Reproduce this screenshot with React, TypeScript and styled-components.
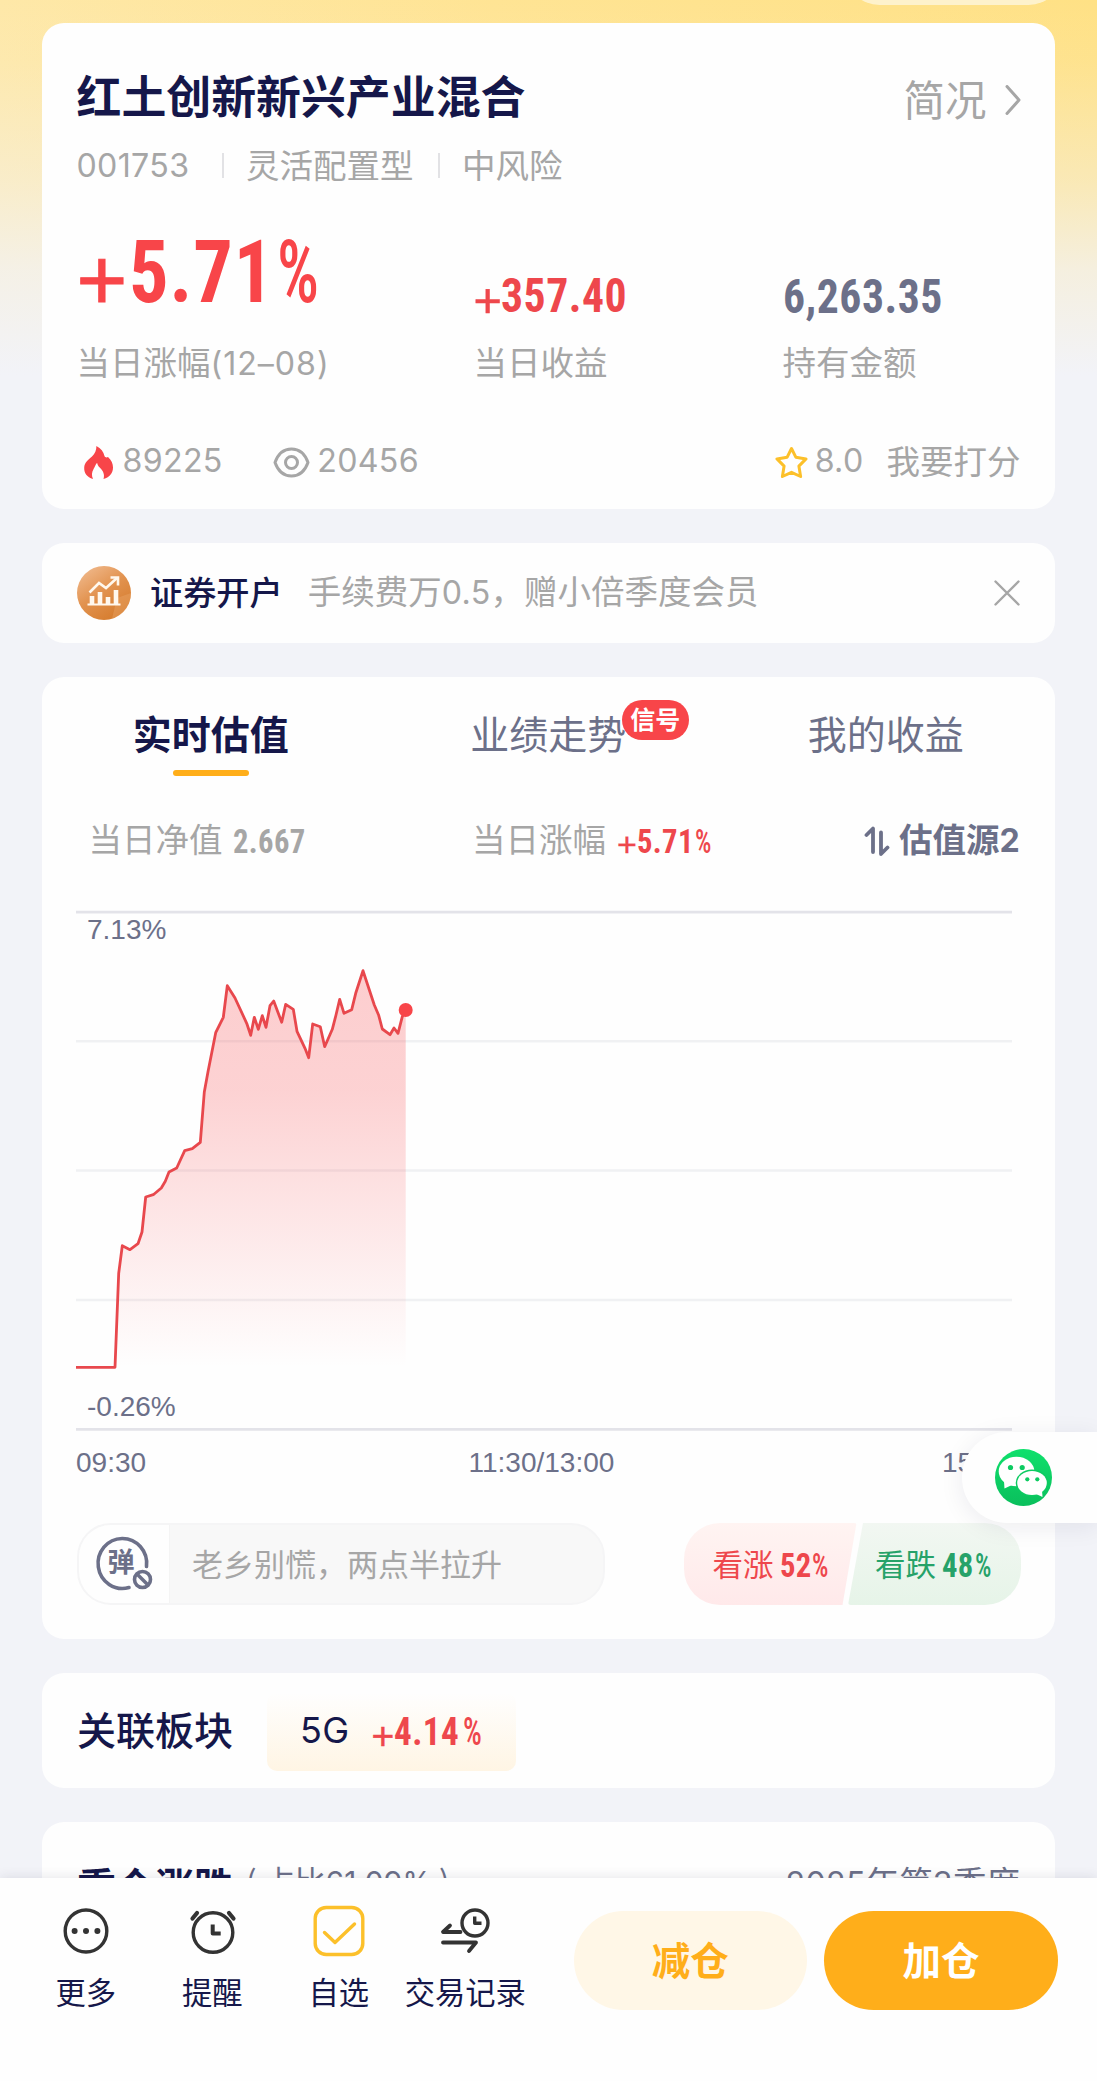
import React from 'react';
import styled, { createGlobalStyle, css } from 'styled-components';

const color = {
  navy: '#15174a',
  grey: '#a6a6a6',
  slate: '#6c7089',
  red: '#f84549',
  redText: '#ee474c',
  green: '#26a269',
  amber: '#ffae1a',
  page: '#f2f3f8',
};

const GlobalStyle = createGlobalStyle`
  *, *::before, *::after { box-sizing: border-box; }
  body {
    margin: 0;
    background: ${color.page};
    font-family: "Noto Sans CJK SC", "Noto Sans", sans-serif;
    color: ${color.navy};
  }
  svg { display: block; flex: none; }
`;

/* ---------- shell ---------- */

const Screen = styled.main`
  position: relative;
  width: 1097px;
  height: 2081px;
  overflow: hidden;
  background:
    linear-gradient(180deg, rgba(242, 243, 248, 0) 0, rgba(242, 243, 248, 0.08) 60px, rgba(242, 243, 248, 0.42) 180px, rgba(242, 243, 248, 0.78) 270px, ${color.page} 375px),
    linear-gradient(90deg, #fee8a8 0, #ffe494 45%, #ffe185 100%);
`;

const TopPill = styled.div`
  position: absolute;
  top: -64px;
  right: 34px;
  width: 218px;
  height: 69px;
  border-radius: 35px;
  background: #fef2cc;
`;

const Cards = styled.div`
  display: flex;
  flex-direction: column;
  gap: 34px;
  padding: 22.5px 42.5px 0 42px;
`;

const Card = styled.section<{ $h: number }>`
  height: ${(p) => p.$h}px;
  flex: none;
  border-radius: 22px;
  background: #fefefe;
`;

/* Latin letters and digits set inside Chinese copy */
const Latin = styled.span`
  font-family: Inter, "Noto Sans", sans-serif;
  font-size: 0.96em;
  letter-spacing: 0.01em;
`;

/* ---------- numerals ---------- */

const FigureBox = styled.span<{ $size: number; $w: number; $color: string }>`
  display: inline-flex;
  align-items: flex-start;
  width: ${(p) => p.$w}px;
  font-family: "Roboto Condensed", Roboto, sans-serif;
  font-size: ${(p) => p.$size}px;
  font-weight: 700;
  color: ${(p) => p.$color};
  white-space: nowrap;
`;

const Digits = styled.span`
  display: inline-block;
  transform: scaleX(0.9);
  transform-origin: 0 50%;
  letter-spacing: 0.012em;
`;

const Plus = styled.span`
  display: inline-block;
  transform: translateY(0.09em);
  font-family: "Liberation Sans", sans-serif;
  font-weight: 400;
  -webkit-text-stroke: 0.012em currentColor;
`;

const Percent = styled.span`
  display: inline-block;
  transform: scaleX(0.76);
  transform-origin: 0 50%;
  font-weight: 500;
`;

const Part = styled.span<{ $w: number }>`
  width: ${(p) => p.$w}em;
  flex: none;
`;

type FigureProps = {
  signWidth?: number;
  digits: string;
  percent?: boolean;
  size: number;
  tone: string;
  digitsWidth: number;
};

function Figure({ signWidth = 0, digits, percent, size, tone, digitsWidth }: FigureProps) {
  const em = signWidth + digitsWidth + (percent ? 0.48 : 0);
  return (
    <FigureBox $size={size} $w={em * size} $color={tone}>
      {signWidth > 0 && (
        <Part $w={signWidth}>
          <Plus>+</Plus>
        </Part>
      )}
      <Part $w={digitsWidth}>
        <Digits>{digits}</Digits>
      </Part>
      {percent && (
        <Part $w={0.48}>
          <Percent>%</Percent>
        </Part>
      )}
    </FigureBox>
  );
}

/* ---------- fund summary ---------- */

const Summary = styled(Card)`
  padding: 42px 34px 0 34.5px;
`;

const TitleRow = styled.header`
  display: flex;
  justify-content: space-between;
  height: 60px;
  line-height: 60px;
`;

const FundName = styled.h1`
  margin: 0;
  font-size: 44.9px;
  font-weight: 700;
`;

const Brief = styled.a`
  display: flex;
  align-items: center;
  gap: 18px;
  height: 60px;
  padding-top: 7px;
  font-size: 41.5px;
  color: ${color.grey};

  svg { margin-top: 4px; }
`;

const Meta = styled.div`
  display: flex;
  align-items: center;
  height: 40px;
  margin-top: 19px;
  font-size: 33.5px;
  line-height: 40px;
  color: ${color.grey};
`;

const FundCode = styled.span`
  width: 110px;
  margin-top: 2px;
  white-space: nowrap;
`;

const Divider = styled.i<{ $l: number; $r: number }>`
  width: 2px;
  height: 25px;
  margin: 4px ${(p) => p.$r}px 0 ${(p) => p.$l}px;
  background: #e2e2e5;
`;

const StatGrid = styled.div`
  display: grid;
  grid-template-columns: 397px 309px 1fr;
  margin-top: 42px;
`;

const FigureSlot = styled.div<{ $lh: number }>`
  display: flex;
  align-items: flex-end;
  height: 92px;
  line-height: ${(p) => p.$lh}px;
`;

const StatLabel = styled.div`
  margin-top: 23px;
  font-size: 33.5px;
  line-height: 40px;
  color: ${color.grey};
`;

const DateRange = styled(Latin)`
  letter-spacing: 0.03em;
`;

const CounterRow = styled.div`
  display: flex;
  align-items: center;
  height: 40px;
  margin-top: 56px;
  padding-left: 6px;
  font-size: 33.5px;
  line-height: 40px;
  color: ${color.grey};
`;

const Counter = styled.span<{ $gap: number; $ml?: string }>`
  display: flex;
  align-items: center;
  gap: ${(p) => p.$gap}px;
  margin-left: ${(p) => p.$ml ?? '0'};

  svg { margin-top: 6px; }
`;

/* ---------- banner ---------- */

const Banner = styled(Card)`
  display: flex;
  align-items: center;
  padding: 0 34.5px 0 35px;
  font-size: 33.5px;
  line-height: 40px;
`;

const BannerTitle = styled.strong`
  margin: -4px 0 0 19px;
  font-size: 33.2px;
  font-weight: 500;
`;

const BannerText = styled.span`
  margin: -2px auto 0 25px;
  color: ${color.grey};
`;

/* ---------- valuation ---------- */

const Tabs = styled.nav`
  display: grid;
  grid-template-columns: repeat(3, 1fr);
  padding-top: 24.5px;
`;

const Tab = styled.div<{ $active?: boolean }>`
  position: relative;
  display: flex;
  flex-direction: column;
  align-items: center;
  height: 74.5px;
  font-size: 39px;
  line-height: 60px;
  color: ${color.slate};
  ${(p) =>
    p.$active &&
    css`
      color: ${color.navy};
      font-weight: 700;
      &::after {
        content: '';
        width: 76px;
        height: 6px;
        margin-top: 8.5px;
        border-radius: 3px;
        background: ${color.amber};
      }
    `}
`;

const Signal = styled.span`
  position: absolute;
  top: -2px;
  left: 242px;
  width: 67.5px;
  height: 40px;
  border-radius: 20px;
  background: ${color.red};
  color: #fff;
  font-size: 25px;
  font-weight: 700;
  line-height: 36px;
  text-align: center;
`;

const Readings = styled.div`
  display: grid;
  grid-template-columns: 383.5px 1fr auto;
  height: 40px;
  margin-top: 42px;
  padding: 0 34.5px 0 46.5px;
  font-size: 33.5px;
  line-height: 40px;
  color: ${color.grey};
`;

const Reading = styled.div<{ $gap: number }>`
  display: flex;
  gap: ${(p) => p.$gap}px;
  & > span:last-child { line-height: 47px; }
`;

const Source = styled.div`
  display: flex;
  align-items: center;
  gap: 9px;
  height: 42px;
  font-weight: 700;
  color: ${color.slate};

  svg { margin-top: 3px; }
`;

const Plot = styled.div`
  position: relative;
  width: 936px;
  height: 521px;
  margin: 52px 0 0 34px;
`;

const YLabel = styled.span<{ $top: number }>`
  position: absolute;
  left: 11px;
  top: ${(p) => p.$top}px;
  font: 28px/36px "Liberation Sans", sans-serif;
  color: ${color.slate};
`;

const XAxis = styled.div`
  display: grid;
  grid-template-columns: 392.5px 1fr auto;
  width: 936px;
  margin: 13.5px 0 0 34px;
  font: 28px/36px "Liberation Sans", sans-serif;
  color: ${color.slate};
`;

const Social = styled.div`
  display: flex;
  justify-content: space-between;
  height: 82px;
  margin: 42.5px 33.5px 0 34.5px;
`;

const Bullet = styled.div`
  display: flex;
  width: 528px;
  overflow: hidden;
  border: 2px solid #f5f5f6;
  border-radius: 34px;
  background: #f8f8f8;
`;

const BulletToggle = styled.div`
  position: relative;
  width: 91px;
  background: #fefefe;
  border-right: 1px solid #f4f4f4;
`;

const BulletGlyph = styled.b`
  position: absolute;
  left: 29px;
  top: 19px;
  font-size: 27px;
  line-height: 34px;
  font-weight: 700;
  color: ${color.slate};
`;

const BulletText = styled.span`
  padding-left: 22.5px;
  font-size: 31px;
  line-height: 76px;
  color: ${color.grey};
`;

const Votes = styled.div`
  display: flex;
`;

const Vote = styled.div<{ $up?: boolean }>`
  display: flex;
  gap: 6px;
  width: 173px;
  height: 82px;
  padding-left: 29px;
  font-size: 30.5px;
  line-height: 80px;
  color: ${(p) => (p.$up ? color.redText : color.green)};
  ${(p) =>
    p.$up
      ? css`
          background: linear-gradient(180deg, #fff4f2, #ffe9ea);
          border-radius: 36px 3px 3px 36px;
          clip-path: polygon(0 0, 100% 0, 159px 100%, 0 100%);
        `
      : css`
          margin-left: -8.5px;
          padding-left: 27px;
          background: linear-gradient(180deg, #f2f7f2, #e6f4e8);
          border-radius: 3px 36px 36px 3px;
          clip-path: polygon(15px 0, 100% 0, 100% 100%, 0 100%);
        `}
  & > span:last-child { line-height: 84px; }
`;

/* ---------- sector ---------- */

const Sector = styled(Card)`
  display: flex;
  align-items: center;
  padding-left: 35px;
`;

const SectionTitle = styled.h2<{ $weight: number; $lift?: number }>`
  margin: ${(p) => -(p.$lift ?? 0)}px 0 0;
  font-size: 39px;
  line-height: 58px;
  font-weight: ${(p) => p.$weight};
`;

const SectorChip = styled.div`
  display: flex;
  align-items: center;
  gap: 23.5px;
  width: 249px;
  height: 78px;
  margin: 4px 0 0 34px;
  padding-left: 33px;
  border-radius: 10px;
  background: linear-gradient(180deg, #fefefe, #fff5e4);
  font-size: 37.5px;
  line-height: 70px;
`;

const SectorName = styled.span`
  width: 48px;
  margin-top: -8px;
`;

const Holdings = styled(Card)`
  display: flex;
  align-items: flex-start;
  padding: 33px 34.5px 0 35px;
`;

const HoldingShare = styled.span`
  margin: -4px 0 0 13px;
  font-size: 31px;
  line-height: 58px;
  color: ${color.slate};
`;

const Quarter = styled.span`
  margin: -5px 0 0 auto;
  font-size: 33.5px;
  line-height: 61px;
  color: ${color.slate};
`;

/* ---------- overlays ---------- */

const ShareTab = styled.aside`
  position: absolute;
  top: 1432px;
  right: 0;
  width: 135px;
  height: 91px;
  padding: 17px 0 0 32.5px;
  border-radius: 45px 0 0 45px;
  background: #fefefe;
  box-shadow: 0 4px 24px rgba(30, 30, 60, 0.08);
`;

const BottomBar = styled.footer`
  position: absolute;
  left: 0;
  right: 0;
  bottom: 0;
  display: flex;
  height: 203.5px;
  padding: 27.5px 39px 0 22.5px;
  background: #fefefe;
  box-shadow: 0 0 12px rgba(30, 30, 60, 0.12);
`;

const NavItem = styled.div`
  display: flex;
  flex-direction: column;
  align-items: center;
  gap: 16px;
  width: 126.5px;
  font-size: 30.3px;
  line-height: 36px;
  white-space: nowrap;
`;

const Action = styled.button<{ $primary?: boolean }>`
  width: ${(p) => (p.$primary ? 234 : 232.5)}px;
  height: 99px;
  margin: 6px 0 0 ${(p) => (p.$primary ? '17.5px' : 'auto')};
  padding: 0 0 5px;
  border: 0;
  border-radius: 50px;
  background: ${(p) => (p.$primary ? color.amber : '#fff7e7')};
  color: ${(p) => (p.$primary ? '#fff' : color.amber)};
  font: 700 38.5px/94px "Noto Sans CJK SC", sans-serif;
`;

/* ---------- drawings ---------- */

const ChevronIcon = () => (
  <svg width="16" height="30" viewBox="0 0 16 30" fill="none" stroke={color.grey} strokeWidth="3" strokeLinecap="round" strokeLinejoin="round">
    <path d="M2 1.500 14 15 2 28.500" />
  </svg>
);

const FlameIcon = () => (
  <svg width="31" height="35" viewBox="0 0 31 35">
    <path
      fill={color.red}
      d="M13.400 1C18 3.500 20.500 6.500 21.500 11 22.300 12.800 23.800 12.600 25 12 28.500 15.500 30 18.500 30 22.500 30 28 27 32 20.500 34 22 29.500 20 25.500 16.700 22.500 15.200 21 14.400 19.500 14.100 17.700 12.300 19.600 12 21.500 10.700 23.800 8.500 27.300 8.500 31 10 34 4 32 1 28 1.200 22.700 1.500 17.500 5 15 9 11.500 12 8.500 13.500 5 13.400 1Z"
    />
  </svg>
);

const EyeIcon = () => (
  <svg width="37" height="31" viewBox="0 0 37 31" fill="none" stroke={color.grey} strokeWidth="3">
    <path d="M2 15.500C5.200 6.500 11.500 2 18.500 2S31.800 6.500 35 15.500C31.800 24.500 25.500 29 18.500 29S5.200 24.500 2 15.500Z" strokeLinejoin="round" />
    <circle cx="18.500" cy="15.500" r="6" />
  </svg>
);

const StarIcon = () => (
  <svg width="33" height="33" viewBox="0 0 33 33" fill="none" stroke="#fcc02a" strokeWidth="3" strokeLinejoin="round">
    <path d="m16.500 2.500 4.300 8.700 10.200 1.700-7.100 7.200 1.700 10.400-9.100-4.200-9.100 4.200 1.700-10.400L2 12.900l10.200-1.700Z" />
  </svg>
);

const BrokerIcon = () => (
  <svg width="54" height="54" viewBox="0 0 54 54">
    <defs>
      <linearGradient id="broker" x1="0.1" y1="0.05" x2="0.7" y2="0.95">
        <stop offset="0" stopColor="#f0b98c" />
        <stop offset="0.5" stopColor="#e29350" />
        <stop offset="1" stopColor="#d67d2f" />
      </linearGradient>
    </defs>
    <circle cx="27" cy="27" r="27" fill="url(#broker)" />
    <path d="M40 32 54 27A27 27 0 0 1 35 52.800Z" fill="#e9a565" opacity=".45" />
    <g stroke="#fff8ee" fill="none">
      <path d="M10.500 38.500h33" strokeWidth="2.200" />
      <path d="M15 38v-8M23 38V26M31 38v-7M39 38V24" strokeWidth="4.600" />
      <path d="M12.500 26.500 22 17l7 5 11-10" strokeWidth="2.600" />
      <path d="M33.500 11.500h7.500v8" strokeWidth="2.600" />
    </g>
  </svg>
);

const CloseIcon = () => (
  <svg width="26" height="26" viewBox="0 0 26 26" stroke={color.grey} strokeWidth="2.400" strokeLinecap="round">
    <path d="M1.500 1.500l23 23M24.500 1.500l-23 23" />
  </svg>
);

const SwapIcon = () => (
  <svg width="26" height="32" viewBox="0 0 26 32" fill="none" stroke={color.slate} strokeWidth="3.800" strokeLinejoin="round" strokeLinecap="round">
    <path d="M2.500 10 9 3.500v23.500" />
    <path d="M17 7.500v21.500l6.500-6.500" />
  </svg>
);

const BulletRing = () => (
  <svg width="91" height="78" viewBox="0 0 91 78" fill="none" stroke={color.slate}>
    <path d="M67.500 41.500A24.300 25 0 1 0 50 62.500" strokeWidth="3.600" strokeLinecap="round" />
    <circle cx="63.500" cy="54.500" r="8" strokeWidth="3.600" />
    <path d="M58 49l11 11" strokeWidth="3.600" />
  </svg>
);

const WechatIcon = () => (
  <svg width="57" height="57" viewBox="0 0 57 57">
    <defs>
      <linearGradient id="wechat" x1="0" y1="0" x2="0" y2="1">
        <stop offset="0" stopColor="#0fe06c" />
        <stop offset="1" stopColor="#0abf5c" />
      </linearGradient>
    </defs>
    <circle cx="28.500" cy="28.500" r="28.500" fill="url(#wechat)" />
    <path d="M9 32 9.500 39.500 18 35.500Z" fill="#fff" />
    <ellipse cx="21.500" cy="22.500" rx="17.800" ry="14.800" fill="#fff" />
    <ellipse cx="37" cy="34" rx="16.300" ry="13.500" fill="#0ccb61" />
    <path d="M40 44.500 47.500 48 47 41Z" fill="#fff" />
    <ellipse cx="37" cy="34" rx="14.800" ry="12" fill="#fff" />
    <g fill="#0ccb61">
      <circle cx="15.500" cy="18.500" r="2.600" />
      <circle cx="27.200" cy="18.500" r="2.600" />
      <circle cx="32.300" cy="30.300" r="2.100" />
      <circle cx="42.300" cy="30.300" r="2.100" />
    </g>
  </svg>
);

const NavSvg = styled.svg.attrs({ width: 52, height: 52, viewBox: '0 0 52 52' })<{ $accent?: boolean }>`
  fill: none;
  stroke: ${(p) => (p.$accent ? '#fcc02a' : '#333')};
  stroke-width: 3.4px;
  stroke-linecap: round;
  stroke-linejoin: round;
`;

const MoreIcon = () => (
  <NavSvg>
    <ellipse cx="26" cy="26" rx="20.800" ry="21" />
    <g fill="#333" stroke="none">
      <circle cx="14.600" cy="26" r="3" />
      <circle cx="26" cy="26" r="3" />
      <circle cx="37.400" cy="26" r="3" />
    </g>
  </NavSvg>
);

const AlarmIcon = () => (
  <NavSvg>
    <circle cx="27" cy="27.500" r="19.800" />
    <path d="M26.700 19.500V28.500h8" strokeWidth="4" strokeLinecap="butt" />
    <path d="M6.500 13.500 11 8M43 8l4.500 5.500" strokeWidth="4.200" />
  </NavSvg>
);

const CheckIcon = () => (
  <NavSvg $accent>
    <rect x="2.200" y="2.500" width="47.600" height="47" rx="11" />
    <path d="M11.500 27.500 22 37.500 41.500 19" />
  </NavSvg>
);

const TradeIcon = () => (
  <NavSvg>
    <circle cx="36" cy="18" r="13" />
    <path d="M35.700 11.500V18.300h6.800" strokeLinecap="butt" />
    <path d="M11 20.500 4 27h17.500M4 37.500h33L30 46" strokeWidth="3.800" />
  </NavSvg>
);

/* ---------- chart ---------- */

const series: [number, number][] = [
  [0, 457.3], [39, 457.3], [42.7, 363.3], [46.3, 335.7], [54, 339.7], [62, 333.7], [66, 322], [69.7, 287],
  [77.3, 284.7], [85.3, 278], [89.3, 271.3], [93, 262], [100.7, 258], [108.7, 240.7], [116.3, 238.7],
  [124.3, 232.3], [128.3, 182], [132, 161.7], [139.7, 122.7], [147.3, 107.3], [151.3, 75.7], [159, 88],
  [170.7, 113.3], [174.7, 125.3], [178.3, 107.3], [182.3, 119.3], [186.3, 105.7], [190, 117.3], [194, 95.7],
  [197.7, 91], [205.7, 112.3], [209.7, 94.3], [217.3, 99.3], [221, 121.3], [229, 138.3], [232.7, 147.7],
  [236.7, 114], [244.3, 116.7], [248.7, 136.7], [256.3, 119.3], [260, 105], [263.7, 89.3], [268, 103.3],
  [275.7, 99.7], [279.7, 83.3], [287, 60.7], [298.3, 95], [302.7, 105.3], [306.3, 119], [314, 124.7],
  [318, 118], [322, 123.3], [326.3, 106.7], [329.7, 100],
];

const line = series.map((p) => p.join(',')).join(' ');

const Chart = () => (
  <svg width="936" height="521" viewBox="0 0 936 521">
    <defs>
      <linearGradient id="area" gradientUnits="userSpaceOnUse" x1="0" y1="60" x2="0" y2="457">
        <stop offset="0" stopColor="#f84549" stopOpacity="0.26" />
        <stop offset="0.3" stopColor="#f84549" stopOpacity="0.24" />
        <stop offset="1" stopColor="#f84549" stopOpacity="0" />
      </linearGradient>
    </defs>
    <g stroke="#f0f1f3" strokeWidth="2.400">
      <path d="M0 131.300h936M0 260.500h936M0 390h936" />
    </g>
    <g stroke="#e3e3e9" strokeWidth="2.800">
      <path d="M0 2.200h936M0 519.300h936" />
    </g>
    <polygon points={`${line} 329.7,457 0,457`} fill="url(#area)" />
    <polyline points={line} fill="none" stroke="#e8484d" strokeWidth="2.800" strokeLinejoin="round" />
    <circle cx="329.700" cy="100" r="7" fill={color.red} />
  </svg>
);

const navItems = [
  { label: '更多', Icon: MoreIcon },
  { label: '提醒', Icon: AlarmIcon },
  { label: '自选', Icon: CheckIcon },
  { label: '交易记录', Icon: TradeIcon },
];

export default function App() {
  return (
    <>
      <GlobalStyle />
      <Screen>
        <TopPill />
        <Cards>
          <Summary $h={486}>
            <TitleRow>
              <FundName>红土创新新兴产业混合</FundName>
              <Brief>
                简况
                <ChevronIcon />
              </Brief>
            </TitleRow>
            <Meta>
              <FundCode>
                <Latin>001753</Latin>
              </FundCode>
              <Divider $l={35} $r={22.5} />
              灵活配置型
              <Divider $l={24} $r={22.5} />
              中风险
            </Meta>
            <StatGrid>
              <div>
                <FigureSlot $lh={92}>
                  <Figure signWidth={0.6} digits="5.71" percent size={87} tone={color.red} digitsWidth={1.7} />
                </FigureSlot>
                <StatLabel>
                  当日涨幅<DateRange>(12–08)</DateRange>
                </StatLabel>
              </div>
              <div>
                <FigureSlot $lh={42}>
                  <Figure signWidth={0.57} digits="357.40" size={48.5} tone={color.redText} digitsWidth={2.6} />
                </FigureSlot>
                <StatLabel>当日收益</StatLabel>
              </div>
              <div>
                <FigureSlot $lh={42}>
                  <Figure digits="6,263.35" size={48.5} tone={color.slate} digitsWidth={3.3} />
                </FigureSlot>
                <StatLabel>持有金额</StatLabel>
              </div>
            </StatGrid>
            <CounterRow>
              <Counter $gap={9}>
                <FlameIcon />
                <span><Latin>89225</Latin></span>
              </Counter>
              <Counter $gap={7.5} $ml="50px">
                <EyeIcon />
                <span><Latin>20456</Latin></span>
              </Counter>
              <Counter $gap={7} $ml="auto">
                <StarIcon />
                <span><Latin>8.0</Latin></span>
              </Counter>
              <Counter $gap={0} $ml="23px">我要打分</Counter>
            </CounterRow>
          </Summary>

          <Banner $h={100.5}>
            <BrokerIcon />
            <BannerTitle>证券开户</BannerTitle>
            <BannerText>
              手续费万<Latin>0.5</Latin>，赠小倍季度会员
            </BannerText>
            <CloseIcon />
          </Banner>

          <Card $h={961.5}>
            <Tabs>
              <Tab $active>实时估值</Tab>
              <Tab>
                业绩走势
                <Signal>信号</Signal>
              </Tab>
              <Tab>我的收益</Tab>
            </Tabs>
            <Readings>
              <Reading $gap={10}>
                当日净值
                <Figure digits="2.667" size={34} tone={color.grey} digitsWidth={2.2} />
              </Reading>
              <Reading $gap={11}>
                当日涨幅
                <Figure signWidth={0.6} digits="5.71" percent size={34} tone={color.redText} digitsWidth={1.7} />
              </Reading>
              <Source>
                <SwapIcon />
                <span>估值源<Latin>2</Latin></span>
              </Source>
            </Readings>
            <Plot>
              <Chart />
              <YLabel $top={1.5}>7.13%</YLabel>
              <YLabel $top={479}>-0.26%</YLabel>
            </Plot>
            <XAxis>
              <span>09:30</span>
              <span>11:30/13:00</span>
              <span>15:00</span>
            </XAxis>
            <Social>
              <Bullet>
                <BulletToggle>
                  <BulletRing />
                  <BulletGlyph>弹</BulletGlyph>
                </BulletToggle>
                <BulletText>老乡别慌，两点半拉升</BulletText>
              </Bullet>
              <Votes>
                <Vote $up>
                  看涨
                  <Figure digits="52" percent size={34} tone={color.redText} digitsWidth={0.96} />
                </Vote>
                <Vote>
                  看跌
                  <Figure digits="48" percent size={34} tone={color.green} digitsWidth={0.96} />
                </Vote>
              </Votes>
            </Social>
          </Card>

          <Sector $h={115}>
            <SectionTitle $weight={500} $lift={4}>关联板块</SectionTitle>
            <SectorChip>
              <SectorName>
                <Latin>5G</Latin>
              </SectorName>
              <Figure signWidth={0.57} digits="4.14" percent size={39} tone={color.redText} digitsWidth={1.77} />
            </SectorChip>
          </Sector>

          <Holdings $h={200}>
            <SectionTitle $weight={700}>重仓涨跌</SectionTitle>
            <HoldingShare>
              ( 占比<Latin>61.09%</Latin> )
            </HoldingShare>
            <Quarter>
              <Latin>2025</Latin>年第<Latin>3</Latin>季度
            </Quarter>
          </Holdings>
        </Cards>

        <ShareTab>
          <WechatIcon />
        </ShareTab>

        <BottomBar>
          {navItems.map(({ label, Icon }) => (
            <NavItem key={label}>
              <Icon />
              {label}
            </NavItem>
          ))}
          <Action>减仓</Action>
          <Action $primary>加仓</Action>
        </BottomBar>
      </Screen>
    </>
  );
}
